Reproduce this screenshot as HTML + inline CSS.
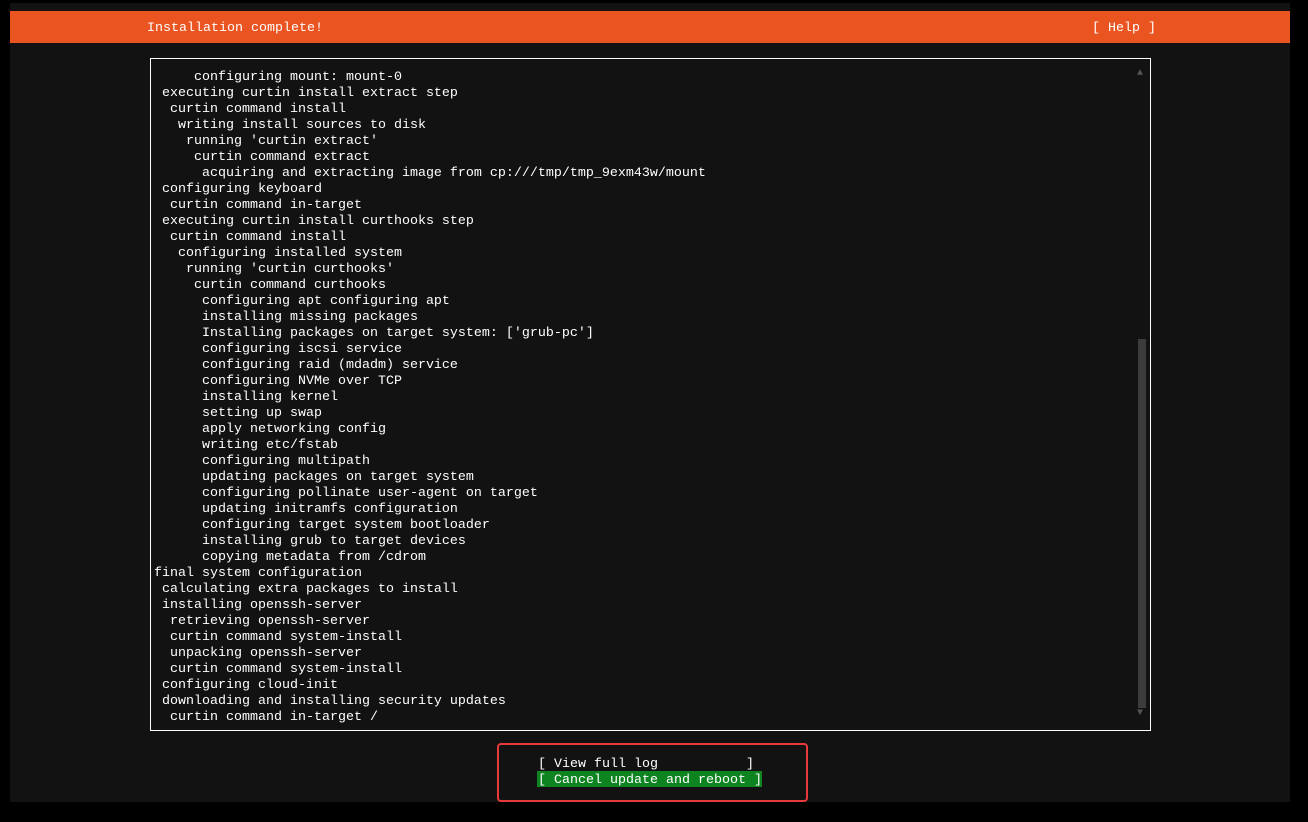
<!DOCTYPE html>
<html><head><style>
html,body{margin:0;padding:0;background:#000;width:1308px;height:822px;overflow:hidden}
.scr{position:absolute;left:10px;top:3px;width:1280px;height:799px;background:#121212}
.bar{position:absolute;left:10px;top:11px;width:1280px;height:32px;background:#e95420}
.t{position:absolute;font-family:"Liberation Mono","DejaVu Sans Mono",monospace;font-size:13.33px;line-height:16px;color:#fff;white-space:pre}
.box{position:absolute;left:150px;top:58px;width:999px;height:671px;border:1px solid #fff}
.thumb{position:absolute;left:1138px;top:339px;width:8px;height:369px;background:#3c3c3c}
.red{position:absolute;left:497px;top:743px;width:307px;height:55px;border:2px solid #e83a3a;border-radius:4px}
.green{position:absolute;left:537px;top:771px;width:225px;height:16px;background:#0e8420}
</style></head><body>
<div class="scr"></div>
<div class="bar"></div>
<div class="t" style="left:147px;top:21px">Installation complete!</div>
<div class="t" style="left:1092px;top:21px">[ Help ]</div>
<div class="box"></div>
<div class="thumb"></div>
<div class="t" style="left:1137px;top:66px;color:#555;font-size:10px">▲</div>
<div class="t" style="left:1137px;top:706px;color:#555;font-size:10px">▼</div>
<div class="t" style="left:154px;top:70px">     configuring mount: mount-0
 executing curtin install extract step
  curtin command install
   writing install sources to disk
    running 'curtin extract'
     curtin command extract
      acquiring and extracting image from cp:///tmp/tmp_9exm43w/mount
 configuring keyboard
  curtin command in-target
 executing curtin install curthooks step
  curtin command install
   configuring installed system
    running 'curtin curthooks'
     curtin command curthooks
      configuring apt configuring apt
      installing missing packages
      Installing packages on target system: ['grub-pc']
      configuring iscsi service
      configuring raid (mdadm) service
      configuring NVMe over TCP
      installing kernel
      setting up swap
      apply networking config
      writing etc/fstab
      configuring multipath
      updating packages on target system
      configuring pollinate user-agent on target
      updating initramfs configuration
      configuring target system bootloader
      installing grub to target devices
      copying metadata from /cdrom
final system configuration
 calculating extra packages to install
 installing openssh-server
  retrieving openssh-server
  curtin command system-install
  unpacking openssh-server
  curtin command system-install
 configuring cloud-init
 downloading and installing security updates
  curtin command in-target /</div>
<div class="red"></div>
<div class="green"></div>
<div class="t" style="left:538px;top:757px">[ View full log           ]
[ Cancel update and reboot ]</div>
</body></html>
